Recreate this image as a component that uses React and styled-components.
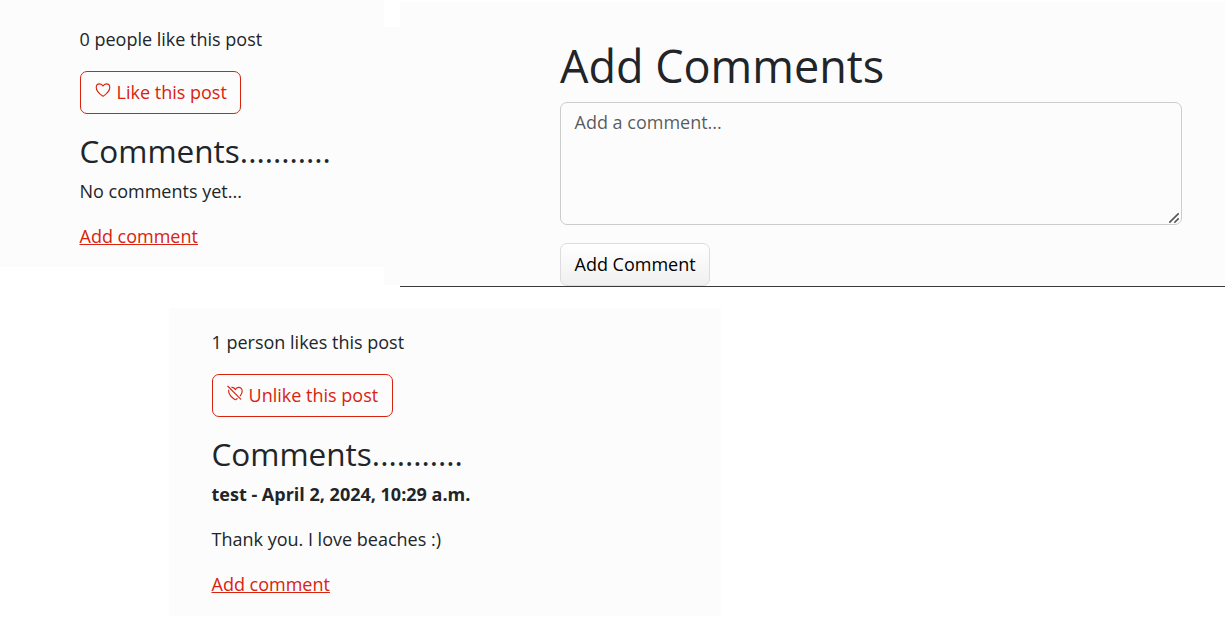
import React from "react";
import styled, { createGlobalStyle } from "styled-components";
import { IoHeartOutline, IoHeartDislikeOutline } from "react-icons/io5";

const GlobalStyle = createGlobalStyle`
  *, *::before, *::after { box-sizing: border-box; }
  body {
    margin: 0;
    background: #fff;
    color: #212529;
    font-family: "Open Sans", sans-serif;
    font-size: 18px;
    font-weight: 400;
    line-height: 1.5;
  }
`;

const Page = styled.main`
  width: 1232px;
  height: 641px;
  overflow: hidden;
`;

const TopRow = styled.div`
  display: flex;
  align-items: flex-start;
  height: 308px;
`;

const LikesPanel = styled.section`
  width: ${(p) => p.$width}px;
  height: ${(p) => p.$height}px;
  margin-left: ${(p) => p.$indent || 0}px;
  padding: ${(p) => p.$padding};
  background: #fcfcfc;
`;

const Gutter = styled.div`
  width: 16px;
  height: 258px;
  margin-top: 27px;
  background: #fcfcfc;
`;

const FormPanel = styled.section`
  width: 825px;
  height: 285px;
  margin-top: 2px;
  padding: 37px 43px 0 160px;
  background: #fcfcfc;
  border-bottom: 1px solid #373a3c;
`;

const Text = styled.p`
  margin: 0 0 18px;
  font-weight: ${(p) => (p.$bold ? 700 : "inherit")};
`;

const Heading = styled.h3`
  margin: 0 0 8px;
  font-size: 31.5px;
  font-weight: 400;
  line-height: 1.2;
`;

const Title = styled.h1`
  margin: 0 0 9px;
  font-size: 45px;
  font-weight: 400;
  line-height: 1.2;
`;

const LikeButton = styled.button`
  display: block;
  height: 43px;
  margin: 0 0 18px;
  padding: 0 13.5px;
  font: inherit;
  color: #d9230f;
  background: transparent;
  border: 1px solid #d9230f;
  border-radius: 7px;
  white-space: nowrap;

  svg {
    width: 18px;
    height: 18px;
    margin-right: 4.6px;
    vertical-align: 0;
  }
`;

const Link = styled.a`
  color: #d9230f;
  text-decoration: underline;
`;

const FieldWrap = styled.div`
  position: relative;
  width: 622px;
  margin: 0 0 18px;
`;

const CommentField = styled.textarea`
  display: block;
  width: 100%;
  height: 123px;
  padding: 6px 13.5px;
  font: inherit;
  color: #212529;
  background: #fcfcfc;
  border: 1px solid #ccc;
  border-radius: 7px;
  resize: none;

  &::placeholder { color: rgba(33, 37, 41, 0.75); }
`;

const ResizeGrip = styled.svg`
  position: absolute;
  right: 3px;
  bottom: 2px;
  width: 10px;
  height: 10px;
  stroke: #555;
  stroke-width: 1.6;
`;

const SubmitButton = styled.button`
  display: block;
  height: 43px;
  padding: 0 13.5px;
  font: inherit;
  color: #000;
  background: linear-gradient(#fff, #f0f0f0);
  border: 1px solid #ddd;
  border-radius: 7px;
`;

export default function App() {
  return (
    <Page>
      <GlobalStyle />
      <TopRow>
        <LikesPanel $width={384} $height={267} $padding="26px 0 0 79.5px">
          <Text>0 people like this post</Text>
          <LikeButton>
            <IoHeartOutline />
            Like this post
          </LikeButton>
          <Heading>Comments...........</Heading>
          <Text>No comments yet...</Text>
          <Link href="#">Add comment</Link>
        </LikesPanel>
        <Gutter />
        <FormPanel>
          <Title>Add Comments</Title>
          <FieldWrap>
            <CommentField placeholder="Add a comment..." />
            <ResizeGrip viewBox="0 0 10 10" aria-hidden="true">
              <path d="M0.3 9.7L9.7 0.3M5.3 9.7L9.7 5.3" />
            </ResizeGrip>
          </FieldWrap>
          <SubmitButton>Add Comment</SubmitButton>
        </FormPanel>
      </TopRow>
      <LikesPanel $width={552} $height={308} $indent={169} $padding="21px 0 0 42.5px">
        <Text>1 person likes this post</Text>
        <LikeButton>
          <IoHeartDislikeOutline />
          Unlike this post
        </LikeButton>
        <Heading>Comments...........</Heading>
        <Text $bold>test - April 2, 2024, 10:29 a.m.</Text>
        <Text>Thank you. I love beaches :)</Text>
        <Link href="#">Add comment</Link>
      </LikesPanel>
    </Page>
  );
}
